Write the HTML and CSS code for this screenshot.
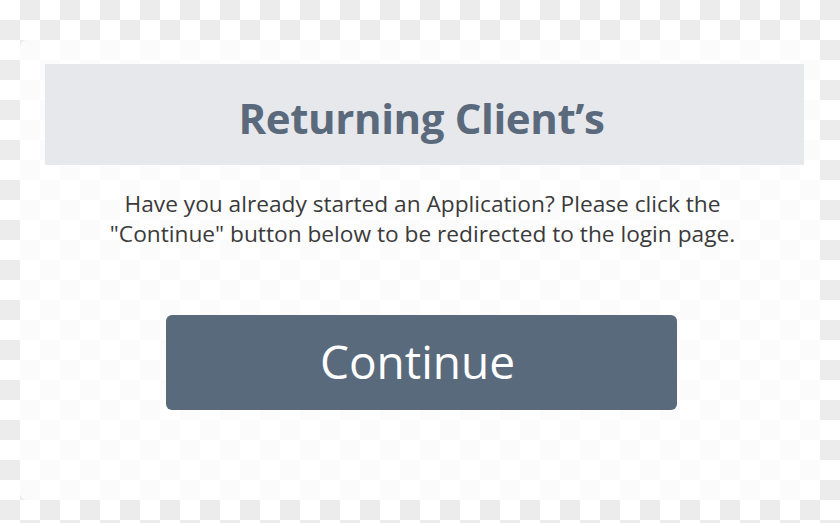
FILE: index.html
```html
<!DOCTYPE html>
<html>
<head>
<meta charset="utf-8">
<link rel="stylesheet" href="styles.css">
</head>
<body>
<div class="card">
  <div class="band">
    <h1 class="title">Returning Client’s</h1>
  </div>
  <p class="message">Have you already started an Application? Please click the<br>"Continue" button below to be redirected to the login page.</p>
  <div class="actions">
    <button class="continue">Continue</button>
  </div>
</div>
</body>
</html>
```

FILE: styles.css
```css
html, body {
  margin: 0;
  padding: 0;
  height: 100%;
}
body {
  background: repeating-conic-gradient(#ececec 0 25%, #ffffff 0 50%) 0 0 / 40px 40px;
  font-family: "Open Sans", "Liberation Sans", sans-serif;
  padding: 40px 20px 0 20px;
  box-sizing: border-box;
}
.card {
  height: 460px;
  background: rgba(255, 255, 255, 0.8);
  border-radius: 7px;
  padding: 24px 16px 0 25px;
  box-sizing: border-box;
}
.band {
  height: 101px;
  background: #e6e8eb;
  display: flex;
  align-items: center;
  justify-content: center;
}
.title {
  margin: 0;
  font-size: 42px;
  font-weight: 700;
  color: #5a6a7c;
  letter-spacing: -0.4px;
  line-height: 1;
  padding-top: 6px;
  padding-right: 6px;
}
.message {
  margin: 24px 0 0 0;
  padding-right: 4px;
  text-align: center;
  font-size: 22.7px;
  line-height: 30px;
  color: #3a3a3a;
}
.actions {
  display: flex;
  justify-content: center;
  margin-top: 66px;
  padding-right: 6px;
}
.continue {
  width: 511px;
  height: 95px;
  background: #5a6a7d;
  border: none;
  border-radius: 6px;
  color: #ffffff;
  font-family: "Open Sans", "Liberation Sans", sans-serif;
  font-size: 46px;
  font-weight: 400;
  padding: 0 8px 4px 0;
}
```
